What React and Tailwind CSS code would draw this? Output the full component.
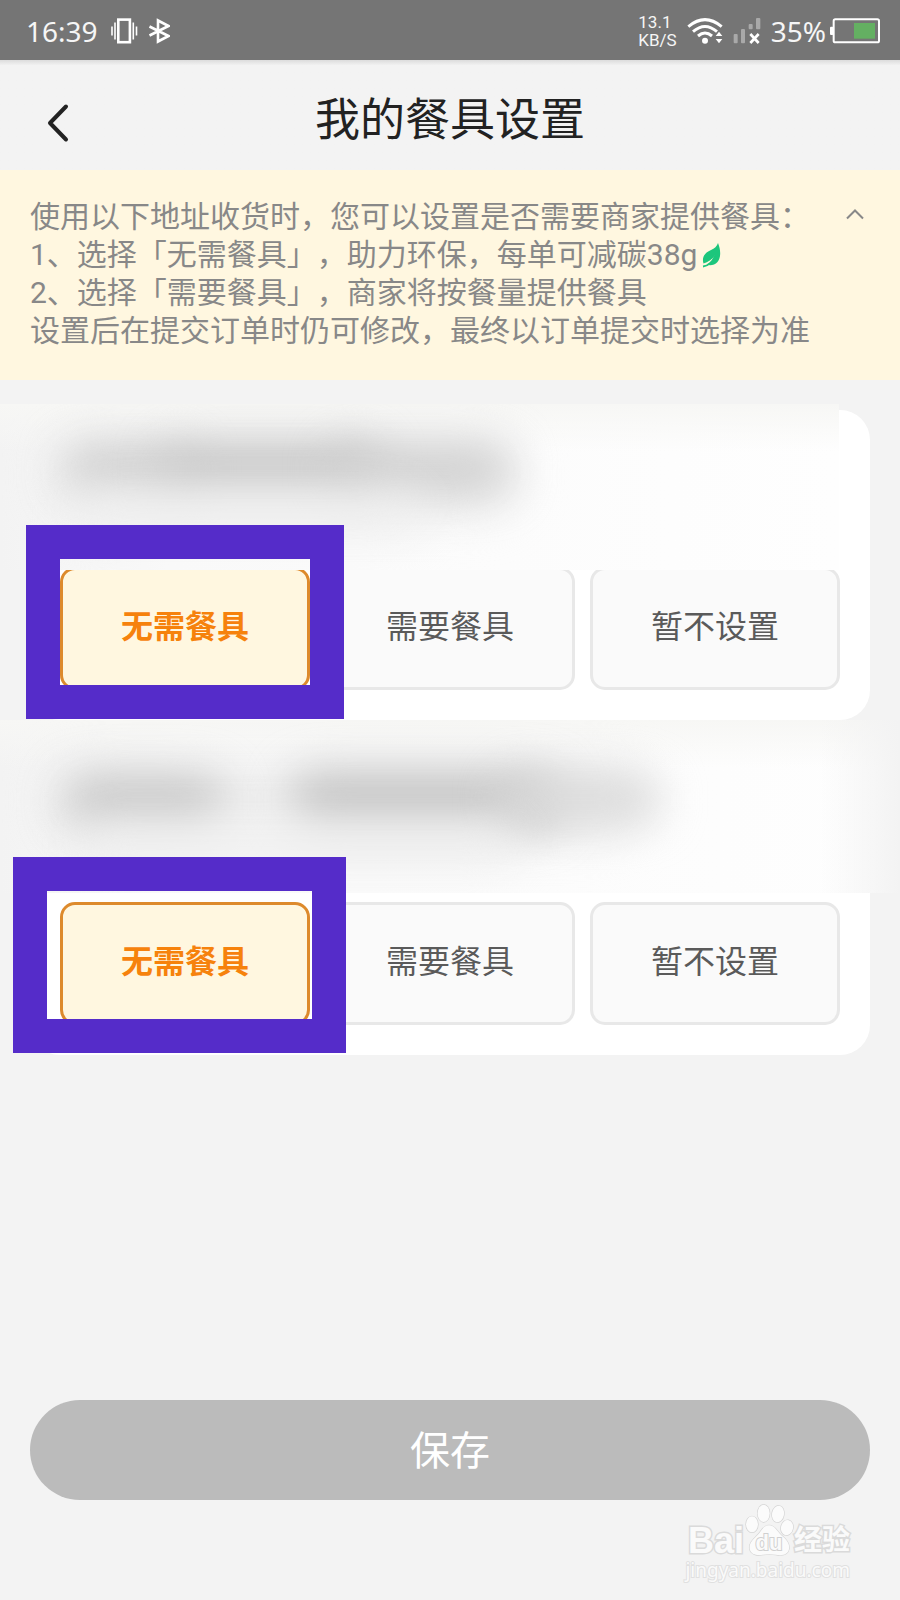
import { useState } from "react";
import clsx from "clsx";

const OPTIONS = ["无需餐具", "需要餐具", "暂不设置"];

const ADDRESSES = [
  {
    id: "first",
    // frame drawn round the recommended option
    mark: "-top-[42px] -right-[34px] -bottom-[29px] -left-[34px]",
    blur: "-top-[6px] -left-[30px] right-[31px] h-[166px] to-[#fefefe]",
    smudges: [
      "left-[50px] top-[32px] w-[470px] h-[80px] bg-[#efefef]",
      "left-[64px] top-[42px] w-[130px] h-[46px] bg-[#cecece]",
      "left-[160px] top-[39px] w-[220px] h-[50px] bg-[#c6c6c6]",
      "left-[330px] top-[42px] w-[180px] h-[46px] bg-[#cecece]",
      "left-[70px] top-[90px] w-[350px] h-[40px] bg-[#f0f0f0]",
    ],
  },
  {
    id: "second",
    mark: "-top-[45px] -right-[36px] -bottom-[28px] -left-[47px]",
    blur: "-top-[25px] -left-[30px] -right-[30px] h-[173px] to-[#fefefe]",
    smudges: [
      "left-[50px] top-[40px] w-[590px] h-[80px] bg-[#efefef]",
      "left-[64px] top-[56px] w-[160px] h-[50px] bg-[#c8c8c8]",
      "left-[290px] top-[53px] w-[270px] h-[54px] bg-[#c4c4c4]",
      "left-[500px] top-[56px] w-[160px] h-[46px] bg-[#dadada]",
      "left-[80px] top-[105px] w-[440px] h-[40px] bg-[#f0f0f0]",
    ],
  },
];

function VibrateIcon() {
  return (
    <svg width="28" height="26" viewBox="0 0 28 26" fill="none" stroke="#fff" aria-hidden="true">
      <rect x="8.3" y="1.6" width="11.6" height="22.6" strokeWidth="2.6" />
      <path d="M2 8.500v9M5 4.500v17M23.300 4.500v17M26.500 8.500v9" strokeWidth="1.6" />
    </svg>
  );
}

function BluetoothIcon() {
  return (
    <svg width="22" height="26" viewBox="0 0 22 26" fill="none" stroke="#fff" strokeWidth="2.6" aria-hidden="true">
      <path d="M1.500 8.500 20.500 18 10 23.500V2.500L20.500 8 1.500 17.500" />
    </svg>
  );
}

function WifiIcon() {
  return (
    <svg width="36" height="26" viewBox="256 54 108 78" fill="none" stroke="#fff" strokeWidth="9" aria-hidden="true">
      <path d="M260 80Q310 38 360 80" />
      <path d="M274 95Q310 64 346 95" />
      <path d="M289 108Q310 90 331 108" />
      <circle cx="310" cy="122" r="9" fill="#fff" stroke="none" />
      <path d="M352 95l10 13h-20zM352 130l10-13h-20z" fill="#fff" stroke="none" />
    </svg>
  );
}

function SignalIcon() {
  return (
    <svg width="28" height="26" viewBox="391 54 84 78" aria-hidden="true">
      <g fill="#a9a9a9">
        <rect x="393" y="102" width="12" height="28" rx="3" />
        <rect x="415" y="87" width="12" height="43" rx="3" />
        <rect x="438" y="72" width="12" height="16" rx="3" />
        <rect x="460" y="54" width="13" height="34" rx="3" />
      </g>
      <path d="M443 102l25 27M468 102l-25 27" stroke="#fff" strokeWidth="8" />
    </svg>
  );
}

function BatteryIcon() {
  return (
    <svg width="50" height="26" viewBox="690 54 150 78" aria-hidden="true">
      <rect x="690" y="80" width="10" height="25" rx="3" fill="#fff" />
      <rect x="701" y="58" width="136" height="69" rx="5" fill="none" stroke="#fff" strokeWidth="6" />
      <rect x="762" y="69" width="63" height="47" fill="#64b062" />
    </svg>
  );
}

function Leaf() {
  return (
    <svg className="ml-1 inline-block pb-1" width="22" height="30" viewBox="0 0 22 26" aria-hidden="true">
      <path
        d="M17 1C19.500 7 20.500 15 16.500 20 13.500 23.500 8.500 24 5.500 22.500 9.500 20.500 12.500 17.500 14 13.500 11 17.500 7 20 2.500 21.500 0.500 15 4 10.500 10 8 13.500 6.500 16 4.500 17 1Z"
        fill="#1cc67c"
      />
      <path d="M2 24.500C7 24 11 21 14 14" fill="none" stroke="#1cc67c" strokeWidth="1.800" />
    </svg>
  );
}

function StatusBar() {
  return (
    <div className="flex h-[60px] items-center bg-[#757575] pt-0.5 pr-5 pl-[26px] font-['Noto_Sans',sans-serif] text-[#f6f6f6]">
      <span className="text-[28px]">16:39</span>
      <div className="ml-3 flex items-center gap-2.5">
        <VibrateIcon />
        <BluetoothIcon />
      </div>
      <div className="ml-auto flex items-center gap-2.5">
        <div className="font-[Roboto,sans-serif] text-[17px] leading-[18px]">
          <div>13.1</div>
          <div>KB/S</div>
        </div>
        <WifiIcon />
        <SignalIcon />
        <div className="flex items-center gap-1">
          <span className="text-[28px]">35%</span>
          <BatteryIcon />
        </div>
      </div>
    </div>
  );
}

function AddressCard({ address }) {
  const [selected, setSelected] = useState(OPTIONS[0]);

  return (
    <section className="relative rounded-[30px] bg-white px-[30px] pt-[157px] pb-[30px]">
      {/* hidden address */}
      <div
        className={clsx(
          "absolute z-10 overflow-hidden bg-linear-to-r from-[#f3f3f3] via-[#fafafa] via-20%",
          address.blur
        )}
      >
        <div className="absolute inset-x-0 top-0 h-12 bg-linear-to-b from-[#f7f7f5] to-transparent" />
        {address.smudges.map((s) => (
          <div key={s} className={clsx("absolute rounded-full blur-[22px]", s)} />
        ))}
        {address.id === "second" && (
          <div className="absolute inset-y-0 right-0 w-20 bg-linear-to-l from-[#f3f3f3] to-transparent" />
        )}
      </div>

      <div className="grid grid-cols-3 gap-[15px]">
        {OPTIONS.map((name, i) => (
          <div key={name} className="relative">
            <button
              type="button"
              aria-pressed={selected === name}
              onClick={() => setSelected(name)}
              className={clsx(
                "block h-[123px] w-full rounded-[15px] border-[3px] pb-1 text-[32px]",
                selected === name
                  ? "border-[#dd8a2c] bg-[#fff7e0] font-bold text-[#f6820c]"
                  : "border-[#e8e8e8] bg-[#fafafa] text-[#5a5a5a]"
              )}
            >
              {name}
            </button>
            {i === 0 && (
              <div className={clsx("pointer-events-none absolute z-20 border-[34px] border-[#552cc9]", address.mark)} />
            )}
          </div>
        ))}
      </div>
    </section>
  );
}

function Watermark() {
  const outline = "text-[#fafafa] [paint-order:stroke_fill]";

  return (
    <div className="flex flex-col items-end pt-[3px] pr-[50px]">
      <div
        className={clsx(
          "flex items-end font-['Liberation_Sans','Noto_Sans_CJK_SC',sans-serif] font-bold [-webkit-text-stroke:3px_#dadada]",
          outline
        )}
      >
        <span className="text-[36px] leading-[32px]">Bai</span>
        <div className="relative">
          <svg width="50" height="54" viewBox="250 66 150 162" fill="#fbfbfb" stroke="#d4d4d4" strokeWidth="4" aria-hidden="true">
            <ellipse cx="274" cy="130" rx="18" ry="24" />
            <ellipse cx="309" cy="97" rx="18" ry="26" />
            <ellipse cx="352" cy="99" rx="18" ry="25" transform="rotate(10 352 99)" />
            <ellipse cx="379" cy="140" rx="18" ry="23" transform="rotate(12 379 140)" />
            <path d="M325 133C343 133 348 150 362 163C378 176 388 188 385 204C381 224 361 224 345 221C332 219 320 219 307 221C289 225 270 220 267 203C265 186 277 176 290 163C303 150 307 133 325 133Z" />
          </svg>
          <span className="absolute inset-x-0 bottom-0 text-center text-[22px] leading-[28px] [-webkit-text-stroke:2px_#d0d0d0]">du</span>
        </div>
        <span className="text-[28px] leading-[32px]">经验</span>
      </div>
      <span className={clsx("font-['Noto_Sans',sans-serif] text-[19px] leading-[26px] [-webkit-text-stroke:2px_#e0e0e0]", outline)}>
        jingyan.baidu.com
      </span>
    </div>
  );
}

export default function App() {
  const [open, setOpen] = useState(true);

  return (
    <div className="flex min-h-screen flex-col bg-[#f3f3f3] font-[Roboto,'Noto_Sans_CJK_SC',sans-serif]">
      <StatusBar />

      <header className="grid h-[110px] grid-cols-[1fr_auto_1fr] items-center bg-linear-to-b from-[#dcdcdc] to-[#f3f3f3] to-5% px-[45px] pt-3">
        <button type="button" aria-label="返回" className="w-[26px] pt-1">
          <svg width="26" height="40" viewBox="0 0 26 40" fill="none" stroke="#222" strokeWidth="4" strokeLinecap="round" strokeLinejoin="round">
            <path d="M21 3.500 5 20l16 16.500" />
          </svg>
        </button>
        <h1 className="text-[45px] text-[#222]">我的餐具设置</h1>
      </header>

      <div className="flex min-h-[210px] items-start bg-[#fff7e0] pt-7 pr-[30px] pb-[30px] pl-[30px] text-[30px] leading-[38px] text-[#888] [text-spacing-trim:space-all]">
        <div className="flex-1">
          <p>使用以下地址收货时，您可以设置是否需要商家提供餐具：</p>
          {open && (
            <>
              <p>1、选择「无需餐具」，助力环保，每单可减碳38g<Leaf /></p>
              <p>2、选择「需要餐具」，商家将按餐量提供餐具</p>
              <p>设置后在提交订单时仍可修改，最终以订单提交时选择为准</p>
            </>
          )}
        </div>
        <button type="button" aria-label="收起" onClick={() => setOpen(!open)} className="flex h-8 w-[30px] items-center justify-center">
          <svg width="18" height="11" viewBox="0 0 18 11" fill="none" stroke="#888" strokeWidth="2">
            <path d="M1 9.500 9 1.500l8 8" />
          </svg>
        </button>
      </div>

      <main className="flex flex-col gap-[25px] px-[30px] pt-[30px] pb-10">
        {ADDRESSES.map((a) => (
          <AddressCard key={a.id} address={a} />
        ))}
      </main>

      <footer className="mt-auto pb-[17px]">
        <div className="px-[30px]">
          <button type="button" className="block h-[100px] w-full rounded-full bg-[#bbb] pt-1 text-[40px] text-white">
            保存
          </button>
        </div>
        <Watermark />
      </footer>
    </div>
  );
}
